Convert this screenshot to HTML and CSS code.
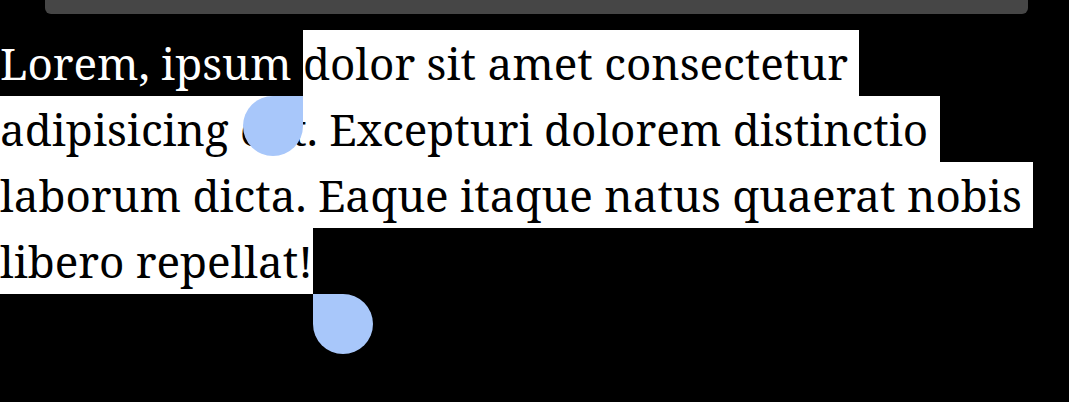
FILE: index.html
```html
<!DOCTYPE html>
<html>
<head>
<meta charset="utf-8">
<link rel="stylesheet" href="styles.css">
</head>
<body>
<div class="bar"></div>
<div class="text">
  <div class="line"><span class="seg plain">Lorem, ipsum </span><span class="seg sel start">dolor sit amet consectetur&nbsp;<span class="handle handle-l"></span></span></div>
  <div class="line"><span class="seg sel">adipisicing elit. Excepturi dolorem distinctio&nbsp;</span></div>
  <div class="line"><span class="seg sel">laborum dicta. Eaque itaque natus quaerat nobis&nbsp;</span></div>
  <div class="line"><span class="seg sel end">libero repellat!<span class="handle handle-r"></span></span></div>
</div>
</body>
</html>
```
FILE: styles.css
```css
html, body {
  margin: 0;
  padding: 0;
  background: #000;
}
body {
  width: 1069px;
  height: 402px;
  overflow: hidden;
  font-family: "Noto Serif", "Droid Serif", "DejaVu Serif", serif;
}
.bar {
  margin-left: 45px;
  width: 983px;
  height: 14px;
  background: #464646;
  border-radius: 0 0 6px 6px;
}
.text {
  margin-top: 16px;
  font-size: 44px;
  line-height: 66px;
}
.line {
  display: flex;
  height: 66px;
  white-space: pre;
}
.seg {
  display: inline-block;
  height: 66px;
  position: relative;
}
.plain {
  color: #fff;
}
.sel {
  background: #fff;
  color: #000;
}
.handle {
  position: absolute;
  top: 100%;
  width: 60px;
  height: 60px;
  background: #a8c7fa;
  z-index: 2;
}
.handle-l {
  right: 100%;
  border-radius: 50% 0 50% 50%;
}
.handle-r {
  left: 100%;
  border-radius: 0 50% 50% 50%;
}
```
